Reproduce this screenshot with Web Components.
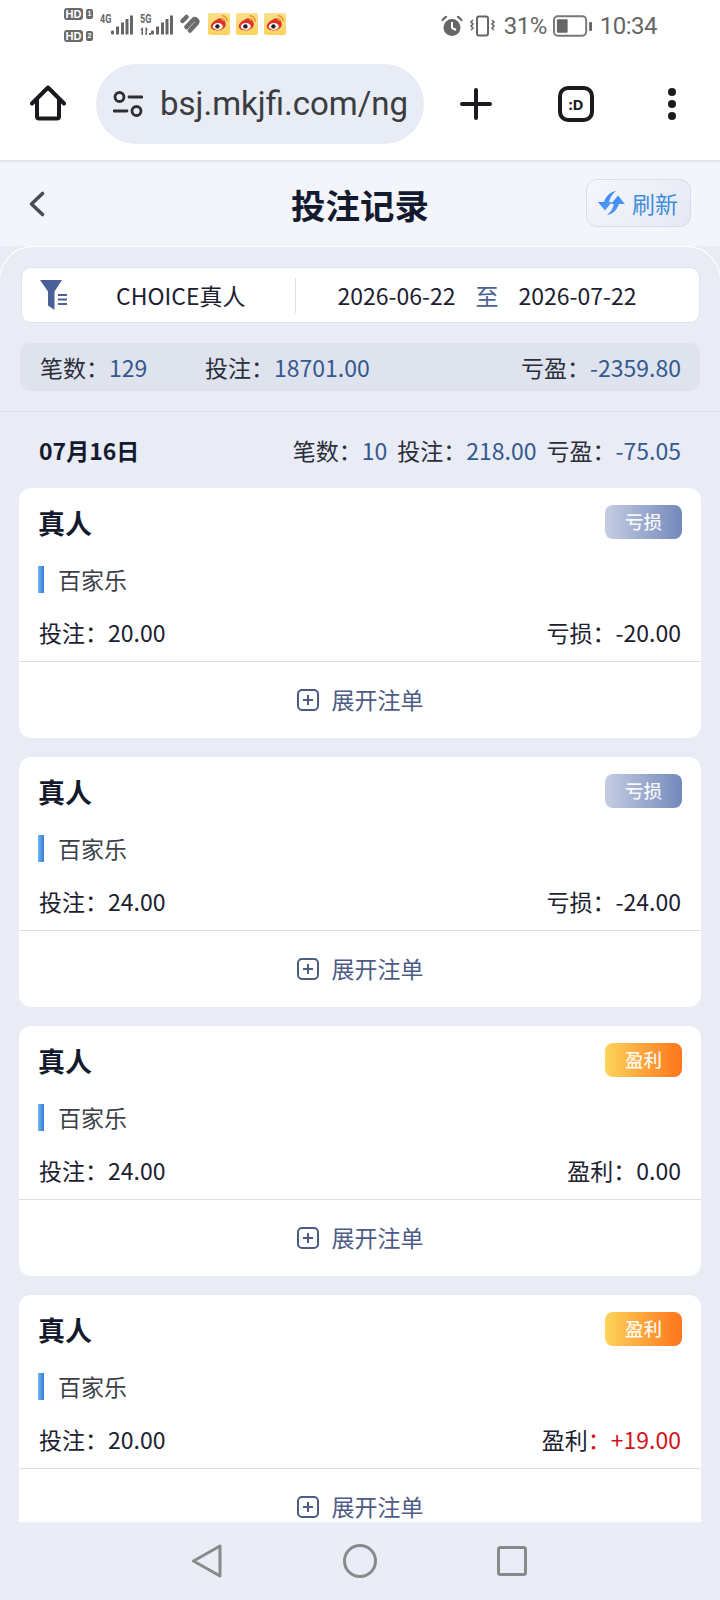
<!DOCTYPE html>
<html lang="zh-CN">
<head>
<meta charset="utf-8">
<title>投注记录</title>
<style>
  html, body { margin: 0; padding: 0; background: #e9ebf5; }
  body { width: 720px; height: 1600px; overflow: hidden; font-family: "Noto Sans CJK SC", "Noto Sans", sans-serif; }
  app-shell { height: 1600px; }
</style>
</head>
<body>
<app-shell>
  <status-bar></status-bar>
  <browser-bar url="bsj.mkjfi.com/ng"></browser-bar>
  <page-header title="投注记录"></page-header>
  <record-list>
    <filter-card name="CHOICE真人" from="2026-06-22" to="2026-07-22"></filter-card>
    <summary-bar count="129" bet="18701.00" profit="-2359.80"></summary-bar>
    <day-header date="07月16日" count="10" bet="218.00" profit="-75.05"></day-header>
    <bet-card bet="20.00" kind="loss" amount="-20.00"></bet-card>
    <bet-card bet="24.00" kind="loss" amount="-24.00"></bet-card>
    <bet-card bet="24.00" kind="win" amount="0.00"></bet-card>
    <bet-card bet="20.00" kind="win" amount="+19.00" red></bet-card>
  </record-list>
  <nav-bar></nav-bar>
</app-shell>

<script>
class AppShell extends HTMLElement {
  constructor() {
    super();
    this.attachShadow({ mode: 'open' });
    this.shadowRoot.innerHTML = `
      <style>
        :host { display: flex; flex-direction: column; width: 720px; overflow: hidden; }
      </style>
      <slot></slot>
    `;
  }
}

class StatusBar extends HTMLElement {
  constructor() {
    super();
    this.attachShadow({ mode: 'open' });
    const weibo = `
      <svg class="wb" width="22" height="22" viewBox="0 0 22 22">
        <defs><linearGradient id="wbg" x1="0" y1="0" x2="0" y2="1"><stop offset="0" stop-color="#fbe08a"/><stop offset="1" stop-color="#fbd35e"/></linearGradient></defs>
        <rect width="22" height="22" rx="2" fill="url(#wbg)"/>
        <path d="M9 6.500c2.500-1.800 4.800-1.600 4.800.800 1.800-.500 3.700.200 3.400 2.300 1 .900 1 3.500-1.100 5.500-2.500 2.400-8.300 3.300-11.300 1.200C2.200 14.800 2.300 12 4 10.200 5.400 8.700 7.200 7.300 9 6.500z" fill="#e0312a"/>
        <ellipse cx="9.800" cy="13.400" rx="5" ry="3.500" fill="#fff"/>
        <circle cx="9.400" cy="13.400" r="2.200" fill="#222"/>
        <path d="M13.500 2.800c3.200-.300 5.900 2.300 5.600 5.600" fill="none" stroke="#f0902a" stroke-width="1.500"/>
        <path d="M13.800 5.600c1.600-.100 2.700 1 2.500 2.600" fill="none" stroke="#f0902a" stroke-width="1.300"/>
      </svg>`;
    const bars = `
      <rect x="0" y="15" width="3" height="4" rx="1"/>
      <rect x="5" y="11" width="3" height="8"/>
      <rect x="10" y="7" width="3" height="12"/>
      <rect x="14.500" y="3.500" width="3" height="15.500"/>
      <rect x="19" y="0" width="3" height="19"/>`;
    this.shadowRoot.innerHTML = `
      <style>
        :host { display: flex; height: 56px; box-sizing: border-box; background: #fff; padding: 8px 63px 0 64px; color: #666; justify-content: space-between; font-family: Roboto, sans-serif; flex: none; }
        .left, .right { display: flex; height: 36px; }
        .hd { display: flex; flex-direction: column; justify-content: space-between; width: 30px; height: 34px; margin-right: 6px; }
        .hdrow { display: flex; align-items: center; gap: 3px; height: 12px; }
        .hdbox { width: 19px; height: 12px; background: #6a6a6a; border-radius: 3px; color: #fff; font: 700 11px/12px "Liberation Sans", sans-serif; text-align: center; }
        .sim { width: 7px; height: 10px; background: #6a6a6a; border-radius: 2px; color: #fff; font: 700 7px/10px "Liberation Sans", sans-serif; text-align: center; }
        .sig { display: flex; position: relative; width: 33px; height: 28px; margin-top: 6px; }
        .net { font: 700 12px/10px "Roboto", sans-serif; transform: scaleX(.75); transform-origin: left top; width: 11px; white-space: nowrap; }
        .sig svg { margin-top: 1px; fill: #666; }
        .arrows { position: absolute; left: 0; top: 13px; fill: #666; }
        .wbs { display: flex; gap: 6px; margin: 5px 0 0 7px; }
        .link { margin: 6px 0 0 7px; }
        .right { align-items: center; height: 36px; padding-top: 0; }
        .pct { font-size: 24px; line-height: 34px; margin: 0 6px 0 7px; letter-spacing: -.5px; }
        .time { font-size: 24px; line-height: 34px; margin-left: 7px; letter-spacing: -.5px; }
      </style>
      <div class="left">
        <div class="hd">
          <div class="hdrow"><span class="hdbox">HD</span><span class="sim">1</span></div>
          <div class="hdrow"><span class="hdbox">HD</span><span class="sim">2</span></div>
        </div>
        <div class="sig"><span class="net">4G</span><svg width="22" height="20" viewBox="0 0 22 19">${bars}</svg></div>
        <div class="sig" style="margin-left:7px">
          <span class="net">5G</span>
          <svg width="22" height="20" viewBox="0 0 22 19">${bars}</svg>
          <svg class="arrows" style="margin:0" width="11" height="8" viewBox="0 0 11 8"><path d="M3 0v8H1.500V3H0zM6 0l2 3H7v5H5.500V0zM9 6h2v2H9z"/></svg>
        </div>
        <svg class="link" width="21" height="20" viewBox="0 0 21 20"><path d="M2.500 7 6.500 3M6.500 13 13 6c2-2 5.500.500 3.800 3L10 16.500" fill="none" stroke="#6c6c6c" stroke-width="4.500" stroke-linecap="round"/></svg>
        <div class="wbs">${weibo}${weibo}${weibo}</div>
      </div>
      <div class="right">
        <svg width="22" height="22" viewBox="0 0 22 22"><circle cx="11" cy="12.500" r="8.500" fill="#666"/><path d="M11 7v6l4 2" fill="none" stroke="#fff" stroke-width="2"/><path d="M1.500 5 5 1.800M20.500 5 17 1.800" stroke="#666" stroke-width="2.200" stroke-linecap="round"/></svg>
        <svg style="margin-left:6px" width="28" height="22" viewBox="0 0 28 22"><rect x="8" y="1.500" width="11" height="19" rx="2" fill="none" stroke="#666" stroke-width="2"/><path d="M4 5l-2 2 2 2-2 2 2 2-2 2M23 5l2 2-2 2 2 2-2 2 2 2" fill="none" stroke="#666" stroke-width="1.600"/></svg>
        <span class="pct">31%</span>
        <svg width="40" height="22" viewBox="0 0 41 22"><rect x="1" y="1" width="33" height="20" rx="4" fill="none" stroke="#777" stroke-width="2"/><rect x="4" y="4" width="11" height="14" rx="1" fill="#666"/><rect x="37" y="7" width="3" height="9" rx="1" fill="#666"/></svg>
        <span class="time">10:34</span>
      </div>
    `;
  }
}

class BrowserBar extends HTMLElement {
  constructor() {
    super();
    this.attachShadow({ mode: 'open' });
    const url = this.getAttribute('url') || '';
    this.shadowRoot.innerHTML = `
      <style>
        :host { display: flex; align-items: flex-start; height: 106px; box-sizing: border-box; background: #fff; border-bottom: 2px solid #e0e4ee; padding: 8px 0 0 30px; flex: none; }
        .pill { display: flex; align-items: center; width: 328px; height: 80px; margin-left: 30px; box-sizing: border-box; padding-left: 17px; background: #e7ecf5; border-radius: 40px; }
        .url { font: 33px/80px Roboto, sans-serif; color: #3a3d42; margin-left: 17px; white-space: nowrap; }
        .home { margin-top: 21px; }
        .plus { margin: 24px 0 0 36px; }
        .tab { display: flex; align-items: center; justify-content: center; width: 36px; height: 36px; box-sizing: border-box; border: 4px solid #1b1b1f; border-radius: 10px; margin: 22px 0 0 66px; font: 700 15px/1 "Noto Sans", sans-serif; color: #1b1b1f; }
        .dots { margin: 23px 0 0 72px; }
      </style>
      <svg class="home" width="36" height="36" viewBox="0 0 36 36"><path d="M2 18.500 18 2.500 34 18.500M7 15v16.500a2 2 0 0 0 2 2h18a2 2 0 0 0 2-2V15" fill="none" stroke="#1b1b1f" stroke-width="4" stroke-linejoin="round" stroke-linecap="round"/></svg>
      <div class="pill">
        <svg width="30" height="26" viewBox="0 0 30 26"><circle cx="6.500" cy="6" r="4.500" fill="none" stroke="#2c2f33" stroke-width="2.800"/><path d="M16 6h13M1 20h13" stroke="#2c2f33" stroke-width="2.800" stroke-linecap="round"/><circle cx="23.500" cy="20" r="4.500" fill="none" stroke="#2c2f33" stroke-width="2.800"/></svg>
        <span class="url">${url}</span>
      </div>
      <svg class="plus" width="32" height="32" viewBox="0 0 32 32"><path d="M16 2v28M2 16h28" stroke="#1b1b1f" stroke-width="4" stroke-linecap="round"/></svg>
      <div class="tab">:D</div>
      <svg class="dots" width="12" height="34" viewBox="0 0 12 34"><circle cx="6" cy="5" r="4" fill="#1b1b1f"/><circle cx="6" cy="17" r="4" fill="#1b1b1f"/><circle cx="6" cy="29" r="4" fill="#1b1b1f"/></svg>
    `;
  }
}

class PageHeader extends HTMLElement {
  constructor() {
    super();
    this.attachShadow({ mode: 'open' });
    const title = this.getAttribute('title') || '';
    this.shadowRoot.innerHTML = `
      <style>
        :host { display: grid; grid-template-columns: 1fr auto 1fr; align-items: center; height: 84px; background: #f4f5fb; flex: none; box-sizing: border-box; }
        .back { margin-left: 28px; display: block; }
        h1 { margin: 0; font: 700 34.500px/1 "Noto Sans CJK SC", sans-serif; color: #141a2e; }
        .refresh { justify-self: end; display: flex; align-items: center; gap: 7px; margin: 0 29px 2px 0; width: 105px; height: 48px; box-sizing: border-box; padding-left: 11px; border: 1px solid #d9dde9; border-radius: 11px; background: linear-gradient(135deg, #f6f7fc, #e5e8f3); color: #3f8ddb; font: 23px/1 "Noto Sans CJK SC", sans-serif; }
      </style>
      <svg class="back" width="20" height="30" viewBox="0 0 20 30"><path d="M14.500 4.500 3.500 15l11 10.500" fill="none" stroke="#4a4d55" stroke-width="3.600" stroke-linecap="round" stroke-linejoin="round"/></svg>
      <h1>${title}</h1>
      <div class="refresh">
        <svg width="27" height="24" viewBox="0 0 27 24">
          <defs><linearGradient id="rf" x1="0" y1="0" x2="1" y2="1"><stop offset="0" stop-color="#2b78f4"/><stop offset="1" stop-color="#62aef6"/></linearGradient></defs>
          <path d="M18 0C12 1 8 5 6 11H0l7 8.500L14 11h-3c1-4 3-8 7-11z" fill="url(#rf)"/>
          <path d="M9 24c6-1 10-5 12-11h6l-7-8.500L13 13h3c-1 4-3 8-7 11z" fill="url(#rf)"/>
        </svg>
        <span>刷新</span>
      </div>
    `;
  }
}

class RecordList extends HTMLElement {
  constructor() {
    super();
    this.attachShadow({ mode: 'open' });
    this.shadowRoot.innerHTML = `
      <style>
        :host { display: block; flex: 1; min-height: 0; overflow: hidden; background: #e9ebf5; box-sizing: border-box; padding: 0 19px; border-top: 1px solid #fff; border-radius: 34px 34px 0 0; box-shadow: -1px 0 0 #fff, 1px 0 0 #fff; }
      </style>
      <slot></slot>
    `;
  }
}

class FilterCard extends HTMLElement {
  constructor() {
    super();
    this.attachShadow({ mode: 'open' });
    const name = this.getAttribute('name') || '';
    const from = this.getAttribute('from') || '';
    const to = this.getAttribute('to') || '';
    this.shadowRoot.innerHTML = `
      <style>
        :host { display: flex; align-items: center; height: 56px; box-sizing: border-box; margin: 20px 1px 20px 2px; background: #fff; border: 1px solid #e0e3ee; border-radius: 10px; font: 23px/1 "Noto Sans CJK SC", sans-serif; color: #1c2030; }
        .icon { margin-left: 18px; flex: none; }
        .name { width: 226px; box-sizing: border-box; padding-left: 47px; flex: none; white-space: nowrap; }
        .line { width: 1px; height: 35px; background: #dcdfe8; flex: none; }
        .dates { flex: 1; display: flex; justify-content: center; gap: 20px; padding-right: 21px; white-space: nowrap; }
        .to { color: #4d6293; }
      </style>
      <svg class="icon" width="29" height="30" viewBox="0 0 29 30"><path d="M0 0h22l-7.500 11.500V30L8 25.500V11.500z" fill="#4a6096"/><path d="M18 15h9M18 19.500h9M18 24h9" stroke="#4a6096" stroke-width="1.800"/></svg>
      <span class="name">${name}</span>
      <span class="line"></span>
      <span class="dates"><span>${from}</span><span class="to">至</span><span>${to}</span></span>
    `;
  }
}

class SummaryBar extends HTMLElement {
  constructor() {
    super();
    this.attachShadow({ mode: 'open' });
    const get = k => this.getAttribute(k) || '';
    this.shadowRoot.innerHTML = `
      <style>
        :host { display: flex; align-items: center; height: 48px; box-sizing: border-box; margin: 0 1px; padding: 0 19px 0 20px; background: #dfe3ee; border-radius: 10px; font: 23px/1 "Noto Sans CJK SC", sans-serif; color: #2a2e3a; white-space: nowrap; }
        b { font-weight: 400; color: #33598f; }
        .a { width: 165px; flex: none; }
        .c { margin-left: auto; }
      </style>
      <span class="a">笔数：<b>${get('count')}</b></span>
      <span>投注：<b>${get('bet')}</b></span>
      <span class="c">亏盈：<b>${get('profit')}</b></span>
    `;
  }
}

class DayHeader extends HTMLElement {
  constructor() {
    super();
    this.attachShadow({ mode: 'open' });
    const get = k => this.getAttribute(k) || '';
    this.shadowRoot.innerHTML = `
      <style>
        :host { display: flex; align-items: center; justify-content: space-between; height: 77px; box-sizing: border-box; margin: 20px -19px 0; padding: 1px 39px 0 39px; border-top: 1px solid #dcdfec; font: 23px/1 "Noto Sans CJK SC", sans-serif; color: #2a2e3a; white-space: nowrap; }
        strong { color: #141a2e; font-weight: 700; }
        b { font-weight: 400; color: #33598f; }
        .stats { display: flex; gap: 10px; }
      </style>
      <strong>${get('date')}</strong>
      <span class="stats"><span>笔数：<b>${get('count')}</b></span><span>投注：<b>${get('bet')}</b></span><span>亏盈：<b>${get('profit')}</b></span></span>
    `;
  }
}

class BetCard extends HTMLElement {
  constructor() {
    super();
    this.attachShadow({ mode: 'open' });
    const win = this.getAttribute('kind') === 'win';
    const red = this.hasAttribute('red');
    this.shadowRoot.innerHTML = `
      <style>
        :host { display: block; height: 250px; box-sizing: border-box; margin: 0 0 19px; background: #fff; border-radius: 12px; font: 23px/1 "Noto Sans CJK SC", sans-serif; color: #1c2030; }
        .top { display: flex; justify-content: space-between; padding: 17px 19px 0 19px; height: 34px; }
        .title { font-size: 27px; font-weight: 700; line-height: 35px; color: #141a2e; }
        .badge { width: 77px; height: 34px; border-radius: 8px; color: rgba(255,255,255,.92); font-size: 18.500px; font-weight: 500; line-height: 33px; text-align: center; background: linear-gradient(90deg, #c5cde2, #7388bb); }
        .badge.win { background: linear-gradient(90deg, #fdd45c, #fe741b); }
        .game { display: flex; align-items: center; gap: 14px; height: 27px; margin: 27px 0 0 19px; color: #3c3f48; }
        .game i { width: 6px; height: 27px; background: linear-gradient(90deg, #6fb5f0, #2f7fd6); flex: none; }
        .row { display: flex; justify-content: space-between; align-items: center; height: 34px; margin: 22px 0 12px; padding: 0 20px; }
        .red { color: #d4121a; }
        .more { display: flex; align-items: center; justify-content: center; gap: 13px; height: 75px; border-top: 1px solid #dcdde3; color: #4d5c85; }
        .more svg { margin-top: 1px; }
      </style>
      <div class="top"><span class="title"><slot name="title">真人</slot></span><span class="badge ${win ? 'win' : ''}">${win ? '盈利' : '亏损'}</span></div>
      <div class="game"><i></i><span><slot name="game">百家乐</slot></span></div>
      <div class="row"><span>投注：${this.getAttribute('bet')}</span><span>${win ? '盈利' : '亏损'}<span class="${red ? 'red' : ''}">：${this.getAttribute('amount')}</span></span></div>
      <div class="more">
        <svg width="22" height="22" viewBox="0 0 22 22"><rect x="1" y="1" width="20" height="20" rx="4" fill="none" stroke="#4d5c85" stroke-width="2"/><path d="M11 6v10M6 11h10" stroke="#4d5c85" stroke-width="2"/></svg>
        <span>展开注单</span>
      </div>
    `;
  }
}

class NavBar extends HTMLElement {
  constructor() {
    super();
    this.attachShadow({ mode: 'open' });
    this.shadowRoot.innerHTML = `
      <style>
        :host { display: flex; justify-content: center; align-items: center; height: 78px; background: #eaecf6; flex: none; }
        svg { display: block; }
        .s { width: 152px; display: flex; justify-content: center; }
      </style>
      <div class="s"><svg width="32" height="34" viewBox="0 0 32 34"><path d="M28 2 1.500 17 28 32z" fill="none" stroke="#8a8a8a" stroke-width="3" stroke-linejoin="round"/></svg></div>
      <div class="s"><svg width="34" height="34" viewBox="0 0 34 34"><circle cx="17" cy="17" r="15.500" fill="none" stroke="#8a8a8a" stroke-width="3"/></svg></div>
      <div class="s"><svg width="30" height="30" viewBox="0 0 30 30"><rect x="1.500" y="1.500" width="27" height="27" rx="2" fill="none" stroke="#8a8a8a" stroke-width="3"/></svg></div>
    `;
  }
}

customElements.define('app-shell', AppShell);
customElements.define('status-bar', StatusBar);
customElements.define('browser-bar', BrowserBar);
customElements.define('page-header', PageHeader);
customElements.define('record-list', RecordList);
customElements.define('filter-card', FilterCard);
customElements.define('summary-bar', SummaryBar);
customElements.define('day-header', DayHeader);
customElements.define('bet-card', BetCard);
customElements.define('nav-bar', NavBar);
</script>
</body>
</html>
